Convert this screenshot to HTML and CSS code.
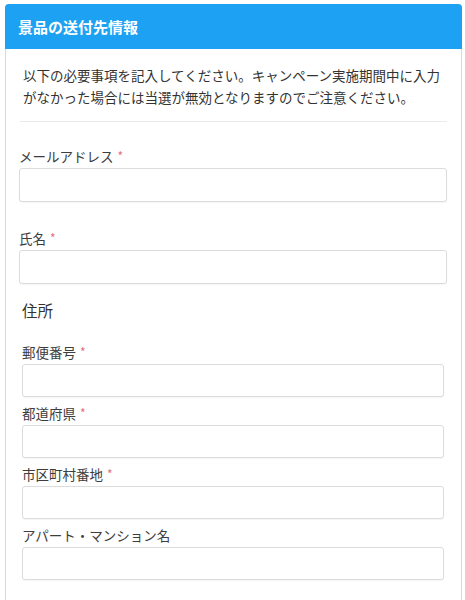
FILE: index.html
```html
<!DOCTYPE html>
<html lang="ja">
<head>
    <meta charset="UTF-8">
    <meta name="viewport" content="width=device-width, initial-scale=1.0">
    <title>景品の送付先情報</title>
    <link rel="stylesheet" href="styles.css">
</head>
<body>
    <div class="card">
        <div class="card-header">景品の送付先情報</div>
        <div class="card-body">
            <p class="notice">以下の必要事項を記入してください。キャンペーン実施期間中に入力がなかった場合には当選が無効となりますのでご注意ください。</p>
            <hr class="divider">

            <div class="form-group">
                <label for="email">メールアドレス<span class="req">*</span></label>
                <input type="email" id="email">
            </div>

            <div class="form-group">
                <label for="name">氏名<span class="req">*</span></label>
                <input type="text" id="name">
            </div>

            <fieldset class="address">
                <legend>住所</legend>

                <div class="address-group">
                    <label for="zip">郵便番号<span class="req">*</span></label>
                    <input type="text" id="zip">
                </div>

                <div class="address-group">
                    <label for="pref">都道府県<span class="req">*</span></label>
                    <input type="text" id="pref">
                </div>

                <div class="address-group">
                    <label for="city">市区町村番地<span class="req">*</span></label>
                    <input type="text" id="city">
                </div>

                <div class="address-group">
                    <label for="building">アパート・マンション名</label>
                    <input type="text" id="building">
                </div>
            </fieldset>
        </div>
    </div>
</body>
</html>
```

FILE: styles.css
```css
* {
    margin: 0;
    padding: 0;
    box-sizing: border-box;
}

body {
    font-family: 'Noto Sans CJK JP', 'Noto Sans', sans-serif;
    color: #333;
    background-color: #fff;
}

.card {
    width: 457px;
    margin: 4px 0 0 5px;
    border: 1px solid #d9d9d9;
    border-top: 0;
    border-radius: 4px;
}

.card-header {
    margin: 0 -1px;
    height: 45px;
    padding-left: 13px;
    display: flex;
    align-items: center;
    background-color: #1da1f2;
    color: #fff;
    font-size: 15px;
    font-weight: bold;
    border-radius: 4px 4px 0 0;
}

.card-body {
    padding: 15px 14px 20px 13px;
}

.notice {
    padding: 0 4px;
    font-size: 13.5px;
    line-height: 22px;
    color: #333;
}

.divider {
    margin: 13px 0 24px 1px;
    border: 0;
    border-top: 1px solid #eaeaea;
}

label {
    display: block;
    font-size: 13.5px;
    line-height: 20px;
    color: #3d3d3d;
    margin-bottom: 2px;
}

.req {
    margin-left: 4px;
    font-size: 12px;
    color: #e2707c;
    vertical-align: 1px;
}

input {
    display: block;
    width: 100%;
    height: 34px;
    border: 1px solid #dcdcdc;
    border-radius: 3px;
    box-shadow: 0 1px 1px rgba(0, 0, 0, 0.04);
    font-size: 14px;
    padding: 0 8px;
    outline: none;
}

.form-group {
    margin-bottom: 26px;
}

.address {
    border: 0;
    padding: 0 3px;
    margin-top: -11px;
}

.address legend {
    font-size: 15.5px;
    line-height: 22px;
    color: #333;
    margin-bottom: 21px;
}

.address-group {
    margin-bottom: 6px;
}

.address-group input {
    height: 33px;
}
```
